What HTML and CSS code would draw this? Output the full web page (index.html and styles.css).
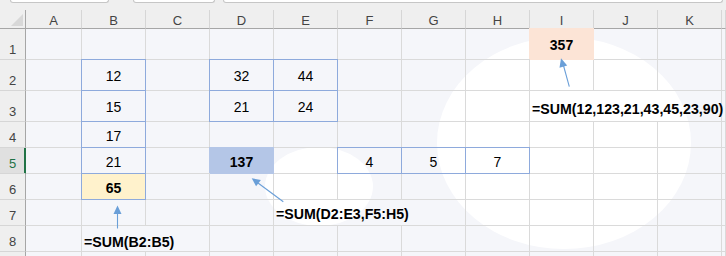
FILE: index.html
```html
<!DOCTYPE html>
<html>
<head>
<meta charset="utf-8">
<link rel="stylesheet" href="styles.css">
</head>
<body>
<div class="sheet">
  <div class="blob blob-lg"></div>
  <div class="blob blob-sm"></div>
  <div class="toolbar">
    <div class="tb tb-name"></div>
    <div class="tb tb-btns"></div>
    <div class="tb tb-formula"></div>
  </div>
  <div class="grid">
    <!-- header -->
    <div class="c corner"><i class="tri"></i></div>
    <div class="c ch">A</div><div class="c ch">B</div><div class="c ch">C</div><div class="c ch">D</div><div class="c ch">E</div><div class="c ch">F</div><div class="c ch">G</div><div class="c ch">H</div><div class="c ch">I</div><div class="c ch">J</div><div class="c ch">K</div><div class="c ch"></div>
    <!-- row 1 -->
    <div class="c rh">1</div>
    <div class="c"></div><div class="c"></div><div class="c"></div><div class="c"></div><div class="c"></div><div class="c"></div><div class="c"></div><div class="c"></div>
    <div class="c b fill-peach">357</div>
    <div class="c"></div><div class="c"></div><div class="c"></div>
    <!-- row 2 -->
    <div class="c rh">2</div>
    <div class="c"></div>
    <div class="c bx">12</div>
    <div class="c"></div>
    <div class="c bx">32</div>
    <div class="c bx">44</div>
    <div class="c"></div><div class="c"></div><div class="c"></div><div class="c"></div><div class="c"></div><div class="c"></div><div class="c"></div>
    <!-- row 3 -->
    <div class="c rh">3</div>
    <div class="c"></div>
    <div class="c bx">15</div>
    <div class="c"></div>
    <div class="c bx">21</div>
    <div class="c bx">24</div>
    <div class="c"></div><div class="c"></div><div class="c"></div>
    <div class="c fx fx-i3 span3">=SUM(12,123,21,43,45,23,90)</div>
    <div class="c"></div>
    <!-- row 4 -->
    <div class="c rh">4</div>
    <div class="c"></div>
    <div class="c bx">17</div>
    <div class="c"></div><div class="c"></div><div class="c"></div><div class="c"></div><div class="c"></div><div class="c"></div><div class="c"></div><div class="c"></div><div class="c"></div><div class="c"></div>
    <!-- row 5 -->
    <div class="c rh sel">5</div>
    <div class="c"></div>
    <div class="c bx">21</div>
    <div class="c"></div>
    <div class="c b fill-blue">137</div>
    <div class="c"></div>
    <div class="c bx">4</div>
    <div class="c bx">5</div>
    <div class="c bx">7</div>
    <div class="c"></div><div class="c"></div><div class="c"></div><div class="c"></div>
    <!-- row 6 -->
    <div class="c rh">6</div>
    <div class="c"></div>
    <div class="c b fill-yellow bx">65</div>
    <div class="c"></div><div class="c"></div><div class="c"></div><div class="c"></div><div class="c"></div><div class="c"></div><div class="c"></div><div class="c"></div><div class="c"></div><div class="c"></div>
    <!-- row 7 -->
    <div class="c rh">7</div>
    <div class="c"></div><div class="c"></div><div class="c"></div><div class="c"></div>
    <div class="c fx span3">=SUM(D2:E3,F5:H5)</div>
    <div class="c"></div><div class="c"></div><div class="c"></div><div class="c"></div><div class="c"></div>
    <!-- row 8 -->
    <div class="c rh">8</div>
    <div class="c"></div>
    <div class="c fx fx-b8 span2">=SUM(B2:B5)</div>
    <div class="c"></div><div class="c"></div><div class="c"></div><div class="c"></div><div class="c"></div><div class="c"></div><div class="c"></div><div class="c"></div><div class="c"></div>
    <!-- row 9 (only its top edge is visible) -->
    <div class="c rh"></div>
    <div class="c"></div><div class="c"></div><div class="c"></div><div class="c"></div><div class="c"></div><div class="c"></div><div class="c"></div><div class="c"></div><div class="c"></div><div class="c"></div><div class="c"></div><div class="c"></div>
  </div>
  <svg class="arrows" width="726" height="256" viewBox="0 0 726 256">
    <g stroke="#6a9fd8" stroke-width="1.1" fill="none">
      <line x1="117.5" y1="228.5" x2="117.5" y2="212"/>
      <line x1="283.3" y1="201.7" x2="257" y2="182.2"/>
      <line x1="569.3" y1="86.7" x2="563.2" y2="64.5"/>
    </g>
    <g fill="#6a9fd8">
      <polygon points="117.5,205.5 113.5,214 121.5,214"/>
      <polygon points="251.7,178.3 260.9,180 256.1,186.3"/>
      <polygon points="561,58.3 567.2,65.6 559.5,67.7"/>
    </g>
  </svg>
</div>
</body>
</html>
```

FILE: styles.css
```css
html, body {
  margin: 0;
  padding: 0;
}
body {
  width: 726px;
  height: 256px;
  overflow: hidden;
  background: #f5f6fa;
  font-family: "Liberation Sans", Arial, sans-serif;
}
.sheet {
  position: relative;
  z-index: 0;
  width: 726px;
  height: 256px;
  overflow: hidden;
  background: #f5f6fa;
}
.blob {
  position: absolute;
  z-index: -1;
  background: #ffffff;
  border-radius: 50%;
}
.blob-lg {
  left: 437px;
  top: 37px;
  width: 254px;
  height: 212px;
}
.blob-sm {
  left: 265px;
  top: 147px;
  width: 108px;
  height: 79px;
}
.toolbar {
  display: flex;
  align-items: flex-start;
  height: 10px;
  background: #efefef;
  padding-left: 10px;
}
.tb {
  height: 2px;
  background: #ffffff;
  border: 1px solid #c6c6c6;
  border-top: none;
  border-radius: 0 0 4px 4px;
}
.tb-name { width: 97px; }
.tb-btns { width: 80px; margin-left: 24px; }
.tb-formula { width: 498px; margin-left: 8px; }
.grid {
  display: grid;
  grid-template-columns: 26px 56px repeat(10, 64px) 1fr;
  grid-template-rows: 19px 31px 31px 31px repeat(6, 26px);
}
.c {
  box-sizing: border-box;
  border-right: 1px solid #dadada;
  border-bottom: 1px solid #dadada;
  display: flex;
  align-items: center;
  justify-content: center;
  padding-top: 2px;
  font-size: 14px;
  color: #000;
  min-width: 0;
}
.corner {
  background: #efefef;
  border-right-color: #a6a6a6;
  border-bottom-color: #a6a6a6;
  justify-content: flex-end;
  align-items: flex-end;
  padding: 0 2px 2px 0;
}
.tri {
  display: block;
  width: 12px;
  height: 12px;
  background: #d8d8d8;
  clip-path: polygon(100% 0, 100% 100%, 0 100%);
}
.ch {
  background: #efefef;
  border-right-color: #d6d6d6;
  border-bottom-color: #a6a6a6;
  font-size: 13px;
  color: #444;
  padding-top: 3px;
}
.rh {
  background: #efefef;
  border-right-color: #a6a6a6;
  border-bottom-color: #d6d6d6;
  align-items: flex-end;
  padding: 0 0 2px 0;
  font-size: 13px;
  color: #444;
}
.rh.sel {
  background: #e0e0e0;
  color: #1e7145;
  border-right-color: #217346;
  box-shadow: inset -1px 0 0 #217346;
}
.b { font-weight: bold; }
.bx { position: relative; }
.bx::after {
  content: "";
  position: absolute;
  top: -1px;
  left: -1px;
  right: -1px;
  bottom: -1px;
  border: 1px solid #8eaadc;
  pointer-events: none;
}
.fill-peach {
  background: #fce4d6;
  border-color: #fce4d6;
  box-shadow: -1px -1px 0 #fce4d6, 0 -1px 0 #fce4d6;
}
.fill-blue {
  background: #b4c6e7;
  border-color: #b4c6e7;
  box-shadow: -1px -1px 0 #b4c6e7, 0 -1px 0 #b4c6e7;
}
.fill-yellow {
  background: #fff2cc;
}
.fx {
  justify-content: flex-start;
  align-items: flex-end;
  padding: 0 0 3px 2px;
  font-size: 14.2px;
  font-weight: bold;
  white-space: nowrap;
  overflow: visible;
}
.fx-i3 { padding-bottom: 4px; }
.fx-b8 { padding-bottom: 1px; }
.span2 { grid-column: span 2; }
.span3 { grid-column: span 3; }
.arrows {
  position: absolute;
  left: 0;
  top: 0;
  pointer-events: none;
}
```
